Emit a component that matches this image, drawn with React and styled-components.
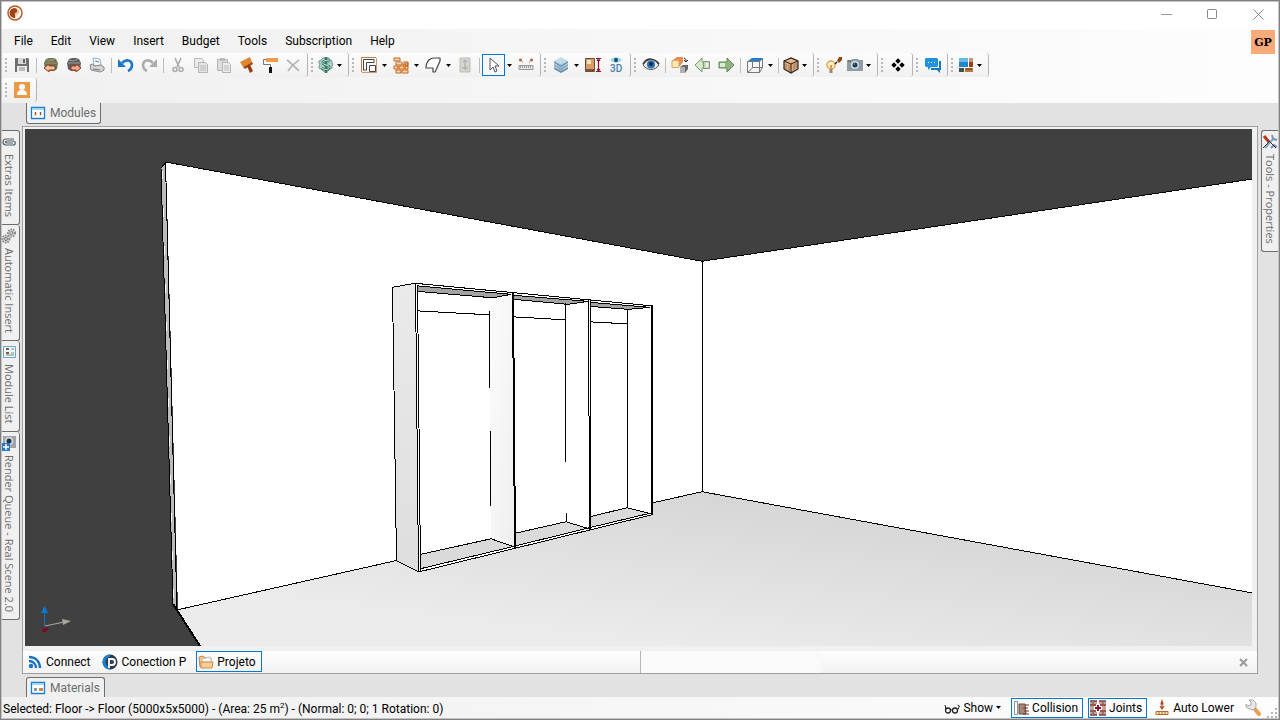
import React from 'react';
import styled, { createGlobalStyle } from 'styled-components';

const GlobalStyle = createGlobalStyle`
    * {
        box-sizing: border-box;
    }
    body {
        margin: 0;
        font-family: Roboto, "Open Sans", "Noto Sans", sans-serif;
        font-size: 12px;
        color: #000;
    }
    button {
        font: inherit;
        color: inherit;
        background: none;
        border: 0;
        padding: 0;
        margin: 0;
    }
`

const Window = styled.div`
    display: flex;
    flex-direction: column;
    height: 100vh;
    border: 1px solid #808080;
    padding: 1px;
    background: #c4c4c4;
    overflow: hidden;
`

const TitleBar = styled.header`
    display: flex;
    justify-content: space-between;
    height: 27px;
    flex-shrink: 0;
    padding-left: 4px;
    background: #fff;
`

const AppLogo = styled.div`
    padding-top: 2px;
    line-height: 0;
`

const WindowButtons = styled.div`
    display: flex;
`

const WindowButton = styled.button`
    width: 46px;
    height: 24px;
    line-height: 0;
    padding-left: 6px;
`

const Chrome = styled.div`
    flex-shrink: 0;
    background: linear-gradient(to right, #f0f0f0, #fdfdfd);
    padding-bottom: 1px;
`

const MenuBar = styled.nav`
    display: flex;
    height: 24px;
    padding: 0 3px;
`

const MenuItem = styled.button`
    padding: 0 9px;
    height: 24px;
    line-height: 24px;
`

const UserBadge = styled.button`
    width: 24px;
    height: 24px;
    margin-left: auto;
    margin-top: 1px;
    background: #f9aa79;
    font: bold 11px "DejaVu Serif", serif;
`

const ToolRow = styled.div`
    display: flex;
    gap: 1px;
    height: 24px;
    margin-bottom: ${props => props.$last ? '0' : '1px'};
`

const Strip = styled.div`
    display: flex;
    align-items: center;
    height: 24px;
    padding-right: 3px;
    border-radius: 3px;
    background: linear-gradient(#fcfcfc, #f0f0f0);
    box-shadow: 1px 0 0 #b4b4b4;
`

const Grip = styled.span`
    width: 2px;
    height: 15px;
    margin: 0 3px;
    background: repeating-linear-gradient(#b8b8b8 0 2px, transparent 2px 4px);
`

const ToolButton = styled.button`
    display: flex;
    align-items: center;
    justify-content: ${props => props.$drop ? 'space-between' : 'center'};
    width: ${props => props.$drop ? '29px' : '23px'};
    height: 22px;
    padding: ${props => props.$drop ? '0 2px 0 1px' : '0'};
    border: 1px solid ${props => props.$active ? '#0078d7' : 'transparent'};
    background: ${props => props.$active ? '#f7f7f7' : 'none'};
`

const ArrowButton = styled.button`
    display: flex;
    align-items: center;
    justify-content: center;
    width: 9px;
    height: 22px;
`

const Separator = styled.span`
    width: 1px;
    height: 15px;
    margin: 0 2px 0 3px;
    background: #bdbdbd;
`

const Dock = styled.main`
    display: flex;
    flex-direction: column;
    flex: 1;
    min-height: 0;
    background: #e2e2e2;
`

const DockRow = styled.div`
    display: flex;
    height: 23px;
    padding-left: 24px;
    align-items: ${props => props.$bottom ? 'flex-end' : 'flex-start'};
`

const DockTab = styled.button`
    display: flex;
    align-items: center;
    gap: 4px;
    height: ${props => props.$bottom ? '20px' : '21px'};
    padding: 0 4px 0 3px;
    color: #6d6d6d;
    background: #f0f0f0;
    border: 1px solid #6d6d6d;
    border-top-width: ${props => props.$bottom ? '1px' : '0'};
    border-bottom-width: ${props => props.$bottom ? '0' : '1px'};
    border-radius: ${props => props.$bottom ? '3px 3px 0 0' : '0 0 3px 3px'};
`

const DockMiddle = styled.div`
    display: flex;
    flex: 1;
    min-height: 0;
`

const Rail = styled.div`
    display: flex;
    flex-direction: column;
    width: 20px;
    padding-top: 4px;
    padding-left: ${props => props.$right ? '3px' : '0'};
    padding-right: ${props => props.$right ? '0' : '2px'};
    flex-shrink: 0;
`

const RailTab = styled.button`
    display: flex;
    align-items: center;
    gap: 4px;
    writing-mode: vertical-rl;
    padding: ${props => props.$right ? '3px 0 7px' : '3px 3px 7px 0'};
    color: #6d6d6d;
    background: #f0f0f0;
    border: 1px solid #6d6d6d;
    border-left-width: ${props => props.$right ? '1px' : '0'};
    border-right-width: ${props => props.$right ? '0' : '1px'};
    border-radius: ${props => props.$right ? '3px 0 0 3px' : '0 3px 3px 0'};
    font-family: "Open Sans", "Noto Sans", sans-serif;
    font-size: 11px;
    line-height: 14px;
    & + & {
        border-top-width: 0;
    }
`

const Viewer = styled.section`
    display: flex;
    flex-direction: column;
    flex: 1;
    min-width: 0;
    border: 1px solid #a0a0a0;
    background: #f0f0f0;
`

const SceneArea = styled.div`
    flex: 1;
    min-height: 0;
    margin: 2px 5px 5px 2px;
    background: #404040;
    & > svg {
        display: block;
        width: 100%;
        height: 100%;
    }
`

const ProjectBar = styled.div`
    display: flex;
    height: 22px;
`

const ProjectTabs = styled.div`
    display: flex;
    align-items: flex-start;
    gap: 4px;
    width: 50%;
    padding-left: 2px;
    background: linear-gradient(#fefefe, #f2f2f2);
`

const ProjectRest = styled(ProjectTabs)`
    align-items: center;
    justify-content: flex-end;
    padding-right: 9px;
    border-left: 1px solid #b4b4b4;
    background: linear-gradient(to right, #fafafa 180px, transparent 180px), linear-gradient(#fefefe, #f2f2f2);
`

const ProjectTab = styled.button`
    display: flex;
    align-items: center;
    gap: 3px;
    height: 21px;
    padding: 0 5px 0 1px;
    border: 1px solid ${props => props.$active ? '#0078d7' : 'transparent'};
`

const CloseProject = styled.button`
    width: 9px;
    height: 9px;
    line-height: 0;
`

const StatusBar = styled.footer`
    display: flex;
    align-items: center;
    height: 21px;
    flex-shrink: 0;
    padding-left: 1px;
    background: linear-gradient(to right, #f0f0f0, #fdfdfd);
`

const StatusText = styled.span`
    margin-right: auto;
    padding-top: 2px;
    white-space: nowrap;
    & sup {
        font-size: 8px;
        line-height: 0;
    }
`

const StatusButton = styled.button`
    display: flex;
    align-items: center;
    gap: 3px;
    height: 20px;
    margin-right: 5px;
    padding: 0 4px 0 1px;
    white-space: nowrap;
    border: 1px solid ${props => props.$active ? '#0078d7' : 'transparent'};
    &:last-of-type {
        margin-right: 0;
    }
`

const SizeGrip = styled.span`
    align-self: flex-end;
    line-height: 0;
`

const gear = 'M5 1h2l1 1 1-1h2l1 2 2 1v2l1 1-1 2v2l-2 1-2 2H5l-2-2-2-1V9l1-1-1-2V4l2-1z';

const icons = {
    save: <>
        <path d="M1 1h13l1 1v13H1z" fill="#707070" />
        <path d="M4 1h8v6H4z" fill="#d8d8d8" /><path d="M3 9h10v6H3z" fill="#eee" />
        <path d="M5 11h6M5 13h6" stroke="#888" /><path d="M9 2h2v4H9z" fill="#666" />
    </>,
    open: <>
        <path d="M3 2l3-1h4l3 1 2 4-1 6-3 2H5l-3-2-1-6z" fill="#5f7558" /><path d="M3 3l4 1 5-2M2 6h12M6 2l5 2" stroke="#b98d68" fill="none" />
        <path d="M1 11l5-4v2h6v4H6v2z" fill="#f3c3a2" stroke="#a03c18" />
    </>,
    export: <>
        <path d="M3 2l3-1h4l3 1 2 4-1 6-3 2H5l-3-2-1-6z" fill="#5c5f62" /><path d="M3 3l4 1 5-2M2 6h12" stroke="#9a9da0" fill="none" />
        <path d="M15 11l-5-4v2H5v4h5v2z" fill="#efab8e" stroke="#a03416" />
    </>,
    print: <>
        <path d="M4 1l7 1 1 6-7 1z" fill="#eef9fc" stroke="#8cb9c8" />
        <path d="M1 8l3-1 1 2 7-1 3 2v3l-4 2-9-2z" fill="#d4d4d4" stroke="#8a8a8a" />
        <path d="M4 12l7 1M6 4l4 1" stroke="#777" />
    </>,
    undo: <>
        <path d="M4 6c5-5 10-2 10 2 0 3-2 5-4 6" fill="none" stroke="#1a76c6" strokeWidth="2.6" />
        <path d="M0 2v8h8z" fill="#1a76c6" />
    </>,
    redo: <>
        <path d="M12 6C7 1 2 4 2 8c0 3 2 5 4 6" fill="none" stroke="#acacac" strokeWidth="2.6" />
        <path d="M16 2v8H8z" fill="#acacac" />
    </>,
    cut: <>
        <path d="M5 1l4 9M11 1L7 10" stroke="#aaa" strokeWidth="1.6" />
        <circle cx="5" cy="12.500" r="2" fill="none" stroke="#aaa" strokeWidth="1.5" />
        <circle cx="11" cy="12.500" r="2" fill="none" stroke="#aaa" strokeWidth="1.5" />
    </>,
    copy: <>
        <path d="M1.500 1.500h7l2 2v7h-9z" fill="#ececec" stroke="#b8b8b8" />
        <path d="M5.500 5.500h7l2 2v8h-9z" fill="#e4e4e4" stroke="#b4b4b4" />
        <path d="M7 9h6M7 11h6M7 13h6" stroke="#bbb" />
    </>,
    paste: <>
        <path d="M1.500 2.500h10v11h-10z" fill="#ddd" stroke="#b4b4b4" /><path d="M4 1h5v3H4z" fill="#bbb" />
        <path d="M6.500 5.500h6l2 2v8h-8z" fill="#ececec" stroke="#b4b4b4" />
        <path d="M8 9h5M8 11h5M8 13h5" stroke="#bbb" />
    </>,
    brush: <>
        <path d="M1 5l10-5 2 5-9 5z" fill="#e0882f" /><path d="M4 10l9-5 1 2-8 5z" fill="#a4480f" />
        <path d="M8 9l3-1 3 6-3 2z" fill="#8f3d0c" />
    </>,
    roller: <>
        <path d="M4 1h12v4H4z" fill="#ef9a48" /><path d="M4 2.500H1.500v5h7V10" fill="none" stroke="#777" />
        <path d="M7 10h3v6H7z" fill="#111" />
    </>,
    remove: <path d="M2 3c4 3 8 7 12 11M14 3C9 7 6 9 3 14" fill="none" stroke="#b4b4b4" strokeWidth="1.700" />,
    user: <>
        <path d="M0 0h16v16H0z" fill="#ea9a45" /><circle cx="8" cy="5" r="3" fill="#fff" />
        <path d="M3 13c0-7 10-7 10 0z" fill="#fff" />
    </>,
    budget: <>
        <path d={gear} fill="#b4cdd0" stroke="#6f979c" />
        <path d="M12 4.500C7 2 3 5 5.500 7l5 2c3 3-3 5-7 2M8 0v16" fill="none" stroke="#357a62" strokeWidth="2.600" />
        <path d="M12 4.500C7 2 3 5 5.500 7l5 2c3 3-3 5-7 2" fill="none" stroke="#cfe8cb" />
    </>,
    wall: <>
        <path d="M1 15.500h14.500V1" fill="none" stroke="#d09a6c" /><path d="M.5 15V.5H15" fill="none" stroke="#c27b43" />
        <path d="M2.500 13V2.500H13v3H5.500V13z" fill="#fff" stroke="#444" />
        <path d="M8.500 8.500h6v6h-6z" fill="#fff" stroke="#444" />
    </>,
    bricks: <>
        <path d="M1 1h6v3H1zM3 5h6v3H3zM1 9h4v3H1zM6 9h5v3H6zM12 6h3v3h-3zM10 5h5v3h-5zM12 9h3v3h-3zM3 13h5v3H3zM9 13h6v3H9z" fill="#ffd9ac" stroke="#c5651a" />
        <path d="M8 5.500h3M3 5.500h4" stroke="#bbb" />
    </>,
    shape: <path d="M4 3q2-2 5-2h6v3l-4 9-1 2H8v-4H1q0-5 3-8z" fill="#fff" stroke="#444" strokeWidth="1.200" strokeLinejoin="round" />,
    door: <>
        <path d="M3 1h10v14H3z" fill="#d4d4d0" stroke="#bdbdb6" /><path d="M8 3v10M5 11h6M6 5l2-2 2 2" fill="none" stroke="#a6a6a0" />
    </>,
    pointer: <path d="M4 1v12l3-3 2 5 2-1-2-5h4z" fill="#fff" stroke="#555" strokeLinejoin="round" />,
    ruler: <>
        <path d="M1 8.500h14v4H1z" fill="#e4e4e4" stroke="#999" /><path d="M2 10h12" stroke="#555" strokeDasharray="1 1" />
        <circle cx="2.500" cy="3" r="1.600" fill="#ba6338" /><circle cx="13.500" cy="3" r="1.600" fill="#ba6338" />
        <path d="M4 5h1M11 5h1" stroke="#777" />
    </>,
    layers: <>
        <path d="M1 10l7 3 7-3v2l-7 4-7-4z" fill="#5f8aa8" /><path d="M1 7l7 3 7-3v2l-7 4-7-4z" fill="#7da4bd" />
        <path d="M1 4l7 3 7-3v2l-7 4-7-4z" fill="#6690ab" /><path d="M1 4l7-4 7 4-7 4z" fill="#c2dbe6" />
        <path d="M1 4l7 4 7-4M1 7l7 4 7-4M1 10l7 4 7-4" fill="none" stroke="#a9c8d8" strokeWidth=".8" />
    </>,
    measure: <>
        <path d="M.5 1.500h9v13h-9z" fill="#d99c64" stroke="#6b4b35" /><path d="M2 3h4v4H2z" fill="#ffe0bd" />
        <path d="M1 13h8" stroke="#805238" strokeWidth="2" />
        <path d="M11 1.500h5M11 14.500h5M13.500 2v12M12 4l1.500-2L15 4M12 12l1.500 2 1.500-2" fill="none" stroke="#8c1029" strokeWidth="1.200" />
    </>,
    view3d: <>
        <path d="M2 3c4-4 8-4 12 0-4 4-8 4-12 0z" fill="#9ed8ea" /><circle cx="8" cy="3" r="2" fill="#174b62" />
        <text x="2" y="15" fontSize="10" fontWeight="500" fill="#477dad">3D</text>
    </>,
    eye: <>
        <path d="M0 8c4-7 12-7 16 0-4 6-12 6-16 0z" fill="#e8e8e8" stroke="#555" />
        <circle cx="8" cy="7.500" r="4" fill="#2a73b9" /><circle cx="8" cy="7" r="2" fill="#102845" />
        <path d="M0 7c4-7 12-6 16 0" fill="none" stroke="#333" strokeWidth="1.500" />
    </>,
    swap: <>
        <path d="M1 3l4-3h6v5l-3 4H1z" fill="#e98d4e" /><path d="M0 3.500h7v7H0z" fill="#ffe7b0" stroke="#dca36b" />
        <path d="M8 10l3-2h5v4l-3 4H8z" fill="#666" /><path d="M8 10h5v6H8z" fill="#b0b0b0" />
        <path d="M12 1c2 1 2 2 2 4M12 3l2 2 2-2" fill="none" stroke="#222" />
    </>,
    back: <><path d="M0 8l7-7v4h2v6H7v4z" fill="#d6e8cb" stroke="#7e9d74" /><path d="M8.500 4.500h6v7h-6z" fill="#c2d8b7" stroke="#85957d" /><path d="M11 6h2v4h-2z" fill="#eef5ea" /></>,
    forward: <><path d="M16 8L9 1v4H1v6h8v4z" fill="#90b484" stroke="#668559" /><path d="M2 6h5v4H2z" fill="#dcebd4" /></>,
    wireCube: <>
        <path d="M1 4l4-3h11l-3 3z" fill="#1d80d0" /><path d="M.5 4.500h12v11H.5zM12.500 4.500l3-3v9l-3 5M5.500 4v7l-5 4.500M5.500 10.500h10" fill="none" stroke="#777" />
    </>,
    woodCube: <>
        <path d="M1 4l7-3 7 3v8l-7 4-7-4z" fill="#d9ac86" stroke="#2e2018" strokeWidth="1.200" />
        <path d="M1 4l7 3 7-3M8 7v9" fill="none" stroke="#2e2018" />
        <path d="M3 7v5M6 8v6M11 7v6M13 6v5" stroke="#a87550" /><path d="M4 4l4-2 4 2-4 1z" fill="#e8bd94" />
    </>,
    bulb: <>
        <circle cx="5" cy="8" r="4" fill="#fff4dd" stroke="#eda13e" strokeWidth="1.500" />
        <path d="M3.500 12h3v4h-3z" fill="#888" /><path d="M4 8l1 3 1-3" fill="none" stroke="#e4891e" />
        <path d="M11 4l2-4h3v3l-3 3z" fill="#8c4816" /><path d="M9 7l2-2" stroke="#222" strokeWidth="1.500" />
    </>,
    camera: <>
        <path d="M0 3h4l1-1h6l1 1h4v11H0z" fill="#8e9ca4" /><path d="M1 4h3" stroke="#555" />
        <circle cx="8" cy="8" r="4" fill="#d8dde0" /><circle cx="8" cy="8" r="2.500" fill="#1c3b5c" /><path d="M7 7h1" stroke="#9bd" />
    </>,
    blocks: <path d="M8 1l3 3-3 3-3-3zM4 5l3 3-3 3-3-3zM12 5l3 3-3 3-3-3zM8 9l3 3-3 3-3-3z" fill="#000" stroke="#f6f6f6" strokeWidth=".5" />,
    chat: <>
        <path d="M14 4h2v9h-1v3l-3-3H6v-2h8z" fill="#147dc2" />
        <path d="M1 1h11l1 1v7l-1 1H6l-3 3v-3H1L0 9V2z" fill="#2093dc" /><path d="M3 5.500h7" stroke="#fff" strokeDasharray="1 2" />
    </>,
    palette: <>
        <path d="M1 1h9v4H1z" fill="#66b9eb" /><path d="M1 5h9v5H1z" fill="#2386cb" /><path d="M11 1h4v4h-4z" fill="#c69572" />
        <path d="M11 5h4v5h-4z" fill="#9a401e" /><path d="M1 11h5v4H1z" fill="#415249" /><path d="M7 11h8v4H7z" fill="#b47b3c" />
        <path d="M8 12h6" stroke="#69391b" />
    </>,
    modules: <>
        <path d="M1.500 2.500h13v11h-13z" fill="#fff" stroke="#1a7fd0" strokeWidth="1.300" /><path d="M2 4h12" stroke="#9bd8f2" strokeWidth="2" />
        <path d="M4 7h3v4H4zM9 7h3v4H9z" fill="#eadbd0" /><path d="M5 7h1v3H5zM10 7h1v3h-1z" fill="#8d5538" />
    </>,
    materials: <>
        <path d="M1.500 2.500h13v11h-13z" fill="#fff" stroke="#1a7fd0" strokeWidth="1.300" /><path d="M2 4h12" stroke="#9bd8f2" strokeWidth="2" />
        <path d="M4 8h3v3H4z" fill="#839aa3" /><path d="M9 8h4v3H9z" fill="#c9874f" />
    </>,
    clip: <path d="M13 5H5C1 5 1 11 5 11h7c3 0 3-4 0-4H6c-2 0-2 2 0 2h6" fill="none" stroke="#53606a" strokeWidth="1.200" />,
    gears: <>
        <circle cx="10.500" cy="5" r="3.500" fill="#ddd" stroke="#8c8686" strokeWidth="2" strokeDasharray="1.500 1" /><circle cx="10.500" cy="5" r="1.500" fill="none" stroke="#777" />
        <circle cx="5" cy="11" r="3.500" fill="#ddd" stroke="#8c8686" strokeWidth="2" strokeDasharray="1.500 1" /><circle cx="5" cy="11" r="1.500" fill="none" stroke="#777" />
    </>,
    list: <>
        <path d="M2.500 2.500h12v11h-12z" fill="#eefbff" stroke="#66a8d2" /><path d="M5 5h3M5 9h3" stroke="#8d5538" strokeWidth="2" />
        <path d="M10 5h3M10 9h3M5 11h8" stroke="#74838a" />
    </>,
    queue: <>
        <path d="M2 1h13v12H2z" fill="#9fa5a9" /><circle cx="8" cy="6" r="4" fill="#ddd" /><circle cx="8" cy="6" r="2.500" fill="#203448" />
        <path d="M1 8h8v8H1z" fill="#2a78c4" /><path d="M5 9v6M2 12h6" stroke="#fff" strokeWidth="1.500" />
    </>,
    tools: <>
        <path d="M3 14l9-10" stroke="#86a5c4" strokeWidth="2" /><path d="M10 1l1 4 4 1M9 14l3-3 3 2" fill="none" stroke="#7797b7" strokeWidth="2" />
        <path d="M2 2l5 6" stroke="#b63718" strokeWidth="3" /><path d="M7 7l7 7M1 14l7-7" stroke="#333" />
    </>,
    connect: <>
        <circle cx="4" cy="12" r="2.200" fill="#1873c2" />
        <path d="M2 7c4 0 7 3 7 7M2 3c7 0 11 5 11 11" fill="none" stroke="#1873c2" strokeWidth="2.400" />
    </>,
    conection: <>
        <circle cx="8" cy="8" r="7.500" fill="#26384e" /><path d="M8 .5a7.500 7.500 0 0 0 0 15" fill="#1a80d0" />
        <circle cx="9" cy="8" r="5.500" fill="#34404d" /><path d="M7 14V5h3c4 0 4 6 0 6H8" fill="none" stroke="#fff" strokeWidth="1.800" />
    </>,
    folder: <>
        <path d="M1 3l4-1 2 2h6v9H2z" fill="#f2c690" stroke="#c98438" /><path d="M4 5l8-2 2 5H4z" fill="#fff" stroke="#bbb" />
        <path d="M3 8h12l-1 6H3z" fill="#f6ce99" stroke="#d38e43" />
    </>,
    glasses: <>
        <circle cx="4" cy="10.500" r="2.500" fill="none" stroke="#222" strokeWidth="1.300" /><circle cx="11" cy="10.500" r="2.500" fill="none" stroke="#222" strokeWidth="1.300" />
        <path d="M6.500 10h2M1.500 10V6l-1-1M13.500 10l2-4-2-1" fill="none" stroke="#222" />
    </>,
    collision: <>
        <path d="M1.500 1.500h3v13h-3z" fill="#fff" stroke="#8d9295" /><path d="M6 4h6l1 10H6z" fill="#a9877a" stroke="#644a3f" />
        <path d="M12 5h4M10 8h5M11 11h5M10 14h6" stroke="#743229" />
    </>,
    joints: <>
        <path d="M0 1h7v14H0zM9 1h7v14H9z" fill="#c3a494" /><path d="M0 1h7M9 1h7M0 5h7M9 5h7M0 11h7M9 11h7M0 15h7M9 15h7" stroke="#873d34" strokeWidth="1.500" />
        <path d="M2 3h2M12 3h2M2 13h2M12 13h2" stroke="#555" /><path d="M8 4v8M4 8h8" stroke="#fff" strokeWidth="4" /><path d="M8 5v6M5 8h6" stroke="#8a0b2c" strokeWidth="2" />
    </>,
    lower: <>
        <path d="M2 11.500h12v3H2z" fill="#ffe4bf" stroke="#b56927" /><path d="M5 12v2M8 12v2M11 12v2" stroke="#b56927" />
        <path d="M8 1v8M6 6l2 3 2-3M7 4l1-3 1 3z" fill="none" stroke="#b1461f" strokeWidth="1.200" />
    </>,
    wrench: <>
        <path d="M8 8l5 6" stroke="#ee9c50" strokeWidth="4" strokeLinecap="round" />
        <path d="M0 4l2 2 3-1V2L3 0h4l3 3v4l-3 3-3-1-4-2z" fill="#e8e8e8" stroke="#a8a8a8" />
    </>,
};

const IconSvg = styled.svg`
    flex-shrink: 0;
    overflow: visible;
`

const Icon = ({ name }) => (
    <IconSvg width="16" height="16" viewBox="0 0 16 16" aria-hidden="true">
        {icons[name]}
    </IconSvg>
)

const Caret = () => (
    <IconSvg width="5" height="3" viewBox="0 0 5 3" aria-hidden="true">
        <path d="M0 0h5L2.500 3z" fill="#000" />
    </IconSvg>
)

const menus = ['File', 'Edit', 'View', 'Insert', 'Budget', 'Tools', 'Subscription', 'Help'];

// "|" is a separator, "name>" has its own arrow button, "name+" opens a menu as one button
const strips = [
    ['save', '|', 'open', 'export', 'print', '|', 'undo', 'redo', '|', 'cut', 'copy', 'paste', 'brush', 'roller', 'remove'],
    ['budget+'],
    ['wall>', 'bricks>', 'shape>', 'door', '|', 'pointer>', 'ruler'],
    ['layers>', 'measure', 'view3d'],
    ['eye', '|', 'swap', 'back', 'forward', '|', 'wireCube>', '|', 'woodCube+'],
    ['bulb', 'camera+'],
    ['blocks'],
    ['chat'],
    ['palette+'],
];

function Tool({ item }) {
    if (item === '|') {
        return <Separator />
    }
    const name = item.replace(/[>+]/, '');
    const drop = item.endsWith('+');
    return (
        <>
            <ToolButton aria-label={name} $drop={drop} $active={name === 'pointer'}>
                <Icon name={name} />
                {drop && <Caret />}
            </ToolButton>
            {item.endsWith('>') && <ArrowButton aria-label={`${name} options`}><Caret /></ArrowButton>}
        </>
    )
}

function ToolStrip({ items }) {
    return (
        <Strip>
            <Grip />
            {items.map((item, i) => <Tool key={i} item={item} />)}
        </Strip>
    )
}

function Scene() {
    return (
        <svg viewBox="25 129 1227 516" preserveAspectRatio="none" role="img" aria-label="Room with wardrobe">
            <defs>
                <linearGradient id="floor" gradientUnits="userSpaceOnUse" x1="702" y1="485" x2="682" y2="645">
                    <stop offset="0" stopColor="#d5d5d5" />
                    <stop offset="1" stopColor="#ebebeb" />
                </linearGradient>
                <linearGradient id="side" x1="0" y1="0" x2="0" y2="1">
                    <stop offset="0" stopColor="#eaeaea" />
                    <stop offset="1" stopColor="#dedede" />
                </linearGradient>
                <linearGradient id="inner" x1="0" y1="0" x2="1" y2="1">
                    <stop offset="0" stopColor="#fcfcfc" />
                    <stop offset="1" stopColor="#efefef" />
                </linearGradient>
            </defs>
            <g shapeRendering="crispEdges">
                <path d="M166 162L702 261V491L178 609z" fill="#fff" />
                <path d="M702 261L1252 179V592L702 491z" fill="#fff" />
                <path d="M178 609L702 491L1252 592V645H200z" fill="url(#floor)" />
                <path d="M161 168L166 162L177.500 609L173 603z" fill="#bbb" />
                <path d="M162 170L174 602" stroke="#fff" strokeDasharray="9 29" />
                <g fill="none" stroke="#000">
                    <path d="M173 603L161 168L166 162L702 261L1252 179M702.500 261V491M165.500 162L177 609L702 491L1252 592" />
                    <path d="M173 603L200 645" strokeWidth="2" />
                </g>

                {/* wardrobe */}
                <path d="M392 287L415 283L652 305V514L419 571L396 560z" fill="#fff" />
                <path d="M392 287L415 283L419 571L396 560z" fill="url(#side)" />
                <path d="M489 297L512 294L514 546L491 538z" fill="url(#inner)" />
                <path d="M420 554L491 538L514 546L420 568zM515 532L566 521L589 528L515 545zM590 516L627 507L651 513L590 526z" fill="#dadada" />
                <path d="M417 286L511 294L493 298L417 291zM514 295L588 301L568 304L514 299zM590 302L650 307L628 309L590 306z" fill="#a3a3a3" />
                <g fill="none" stroke="#000">
                    <path d="M392.500 287L415 283L652 305.500M392.500 287L396.500 560L419 571L652 514" />
                    <path d="M415.500 283L418.500 571M417.500 285L420.500 570" />
                    <path d="M417 285.500L511 294L493 297.500L417 291M514 295L588 301L568 304L514 299M590 302L650 307L628 309L590 306" />
                    <path d="M417 310.500L490 314.500M489.500 311V387M490.500 430V505M514 316.500L566 319.500M565.500 303V461M566.500 512V521M590 321.500L628 323.500M627.500 309V507" />
                    <path d="M421 553.500L491 538L514 546M515 532.500L566 521L589 528M590 516L627 507L651 513" />
                    <path d="M420 568L514 545.500L589 527L652 512" />
                    <path d="M512.500 293L514.500 547M513.500 293L515.500 547M588.500 300L589.500 529M590.500 300V528" />
                    <path d="M652 305V514" strokeWidth="2" />
                </g>
            </g>

            {/* axes */}
            <path d="M44.500 610V625" stroke="#0c78d0" />
            <path d="M41 612L44.500 605L48 612z" fill="#0c78d0" />
            <path d="M45 625L64 621" stroke="#a3a89f" />
            <path d="M62 618L71 620L63 624z" fill="#a3a89f" />
            <path d="M42 628L46 626L49 628L45 631H42z" fill="#7a0a2c" />
        </svg>
    )
}

export default function App() {
    return (
        <Window>
            <GlobalStyle />
            <TitleBar>
                <AppLogo>
                    <svg width="18" height="18" viewBox="0 0 18 18" aria-hidden="true">
                        <circle cx="9" cy="9" r="7" fill="#fff" stroke="#b95a24" strokeWidth="1.500" />
                        <path d="M9 4c5 0 6 6 1 8v2H8z" fill="#f6c79c" />
                        <path d="M8 4v10C2 13 2 5 8 4zM8 4c4 0 4 5 1 5v5H8z" fill="#9c4518" />
                    </svg>
                </AppLogo>
                <WindowButtons>
                    <WindowButton aria-label="Minimize">
                        <svg width="11" height="11"><path d="M0 5.500h11" stroke="#999" /></svg>
                    </WindowButton>
                    <WindowButton aria-label="Maximize">
                        <svg width="11" height="11"><rect x=".5" y=".5" width="9" height="9" rx="1" fill="none" stroke="#888" /></svg>
                    </WindowButton>
                    <WindowButton aria-label="Close">
                        <svg width="11" height="11"><path d="M.5.5l10 10M10.500.5l-10 10" stroke="#888" /></svg>
                    </WindowButton>
                </WindowButtons>
            </TitleBar>
            <Chrome>
                <MenuBar>
                    {menus.map(menu => <MenuItem key={menu}>{menu}</MenuItem>)}
                    <UserBadge>GP</UserBadge>
                </MenuBar>
                <ToolRow>
                    {strips.map((items, i) => <ToolStrip key={i} items={items} />)}
                </ToolRow>
                <ToolRow $last>
                    <ToolStrip items={['user']} />
                </ToolRow>
            </Chrome>
            <Dock>
                <DockRow>
                    <DockTab><Icon name="modules" />Modules</DockTab>
                </DockRow>
                <DockMiddle>
                    <Rail>
                        <RailTab><Icon name="clip" />Extras Items</RailTab>
                        <RailTab><Icon name="gears" />Automatic Insert</RailTab>
                        <RailTab><Icon name="list" />Module List</RailTab>
                        <RailTab><Icon name="queue" />Render Queue - Real Scene 2.0</RailTab>
                    </Rail>
                    <Viewer>
                        <SceneArea><Scene /></SceneArea>
                        <ProjectBar>
                            <ProjectTabs>
                                <ProjectTab><Icon name="connect" />Connect</ProjectTab>
                                <ProjectTab><Icon name="conection" />Conection P</ProjectTab>
                                <ProjectTab $active><Icon name="folder" />Projeto</ProjectTab>
                            </ProjectTabs>
                            <ProjectRest>
                                <CloseProject aria-label="Close project">
                                    <svg width="9" height="9"><path d="M1 1l7 7M8 1L1 8" stroke="#999" strokeWidth="2" /></svg>
                                </CloseProject>
                            </ProjectRest>
                        </ProjectBar>
                    </Viewer>
                    <Rail $right>
                        <RailTab $right><Icon name="tools" />Tools - Properties</RailTab>
                    </Rail>
                </DockMiddle>
                <DockRow $bottom>
                    <DockTab $bottom><Icon name="materials" />Materials</DockTab>
                </DockRow>
            </Dock>
            <StatusBar>
                <StatusText>Selected: Floor -&gt; Floor (5000x5x5000) - (Area: 25 m<sup>2</sup>) - (Normal: 0; 0; 1 Rotation: 0)</StatusText>
                <StatusButton><Icon name="glasses" />Show <Caret /></StatusButton>
                <StatusButton $active><Icon name="collision" />Collision</StatusButton>
                <StatusButton $active><Icon name="joints" />Joints</StatusButton>
                <StatusButton><Icon name="lower" />Auto Lower</StatusButton>
                <StatusButton aria-label="Settings"><Icon name="wrench" /></StatusButton>
                <SizeGrip>
                    <svg width="11" height="11"><path d="M8 1h2v2H8zM8 5h2v2H8zM8 9h2v2H8zM4 5h2v2H4zM4 9h2v2H4zM0 9h2v2H0z" fill="#b4b4b4" /></svg>
                </SizeGrip>
            </StatusBar>
        </Window>
    )
}
